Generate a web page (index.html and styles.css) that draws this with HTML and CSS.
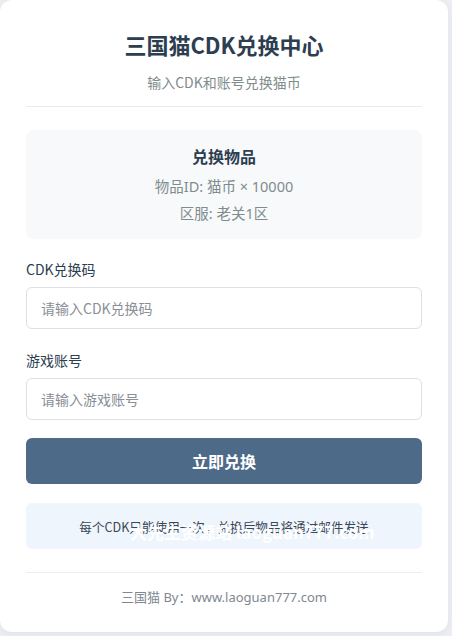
FILE: index.html
```html
<!DOCTYPE html>
<html lang="zh-CN">
<head>
<meta charset="utf-8">
<title>三国猫CDK兑换中心</title>
<link rel="stylesheet" href="styles.css">
</head>
<body>
<div class="card">
  <header class="header">
    <h1 class="title">三国猫CDK兑换中心</h1>
    <p class="subtitle">输入CDK和账号兑换猫币</p>
  </header>
  <section class="item-box">
    <h2 class="item-title">兑换物品</h2>
    <p class="item-line">物品ID: 猫币 × 10000</p>
    <p class="item-line">区服: 老关1区</p>
  </section>
  <form class="form">
    <div class="field">
      <label class="label">CDK兑换码</label>
      <input class="input" type="text" placeholder="请输入CDK兑换码">
    </div>
    <div class="field">
      <label class="label">游戏账号</label>
      <input class="input" type="text" placeholder="请输入游戏账号">
    </div>
    <button class="btn" type="button">立即兑换</button>
  </form>
  <div class="notice">
    <span class="notice-text">每个CDK只能使用一次，兑换后物品将通过邮件发送</span>
    <span class="watermark">大先生资源站 laoguan777.com</span>
  </div>
  <footer class="footer">三国猫 By：www.laoguan777.com</footer>
</div>
</body>
</html>
```
FILE: styles.css
```css
* { box-sizing: border-box; }
html, body { margin: 0; padding: 0; }
body {
  background: #eceef3;
  font-family: "Noto Sans", "Noto Sans CJK SC", sans-serif;
  width: 452px;
  height: 636px;
}
.card {
  width: 448px;
  background: #ffffff;
  border-radius: 12px;
  box-shadow: 0 2px 8px rgba(40, 50, 80, 0.06);
  padding: 29px 26px 25px;
}
.header {
  text-align: center;
  padding-bottom: 14px;
  border-bottom: 1px solid #e9ebee;
}
.title {
  margin: 0;
  font-size: 22px;
  line-height: 30px;
  font-weight: 700;
  color: #2c3e50;
  font-family: "Noto Sans CJK SC", sans-serif;
}
.subtitle {
  margin: 13px 0 0;
  font-size: 14px;
  line-height: 20px;
  color: #7f8c8d;
  font-family: "Noto Sans CJK SC", sans-serif;
}
.item-box {
  margin-top: 23px;
  background: #f8f9fb;
  border-radius: 8px;
  padding: 14px 16px 12px;
  text-align: center;
}
.item-title {
  margin: 0 0 5px;
  font-size: 16px;
  line-height: 24px;
  font-weight: 700;
  color: #2c3e50;
  font-family: "Noto Sans CJK SC", sans-serif;
}
.item-line {
  margin: 0;
  font-size: 14.5px;
  line-height: 27px;
  color: #7f8c8d;
  font-family: "Noto Sans", "Noto Sans CJK SC", sans-serif;
}
.form {
  margin-top: 20px;
  display: flex;
  flex-direction: column;
}
.field {
  display: flex;
  flex-direction: column;
  gap: 8px;
  margin-bottom: 21px;
}
.field:nth-child(2) { margin-bottom: 18px; }
.label {
  font-size: 14px;
  line-height: 20px;
  color: #2c3e50;
  font-family: "Noto Sans CJK SC", sans-serif;
}
.input {
  height: 42px;
  border: 1px solid #dcdfe6;
  border-radius: 6px;
  padding: 0 14px;
  font-size: 14px;
  font-family: "Noto Sans CJK SC", sans-serif;
  color: #333;
  background: #fff;
  outline: none;
}
.input::placeholder { color: #8a8f96; }
.btn {
  height: 46px;
  border: none;
  border-radius: 6px;
  background: #4d6a89;
  color: #ffffff;
  font-size: 16px;
  font-weight: 700;
  font-family: "Noto Sans CJK SC", sans-serif;
  cursor: pointer;
}
.notice {
  position: relative;
  margin-top: 19px;
  height: 46px;
  background: #eef5fd;
  border-radius: 6px;
  display: flex;
  align-items: center;
  justify-content: center;
  font-size: 12.6px;
  color: #3a4755;
  font-family: "Noto Sans CJK SC", sans-serif;
}
.watermark {
  position: absolute;
  left: 104px;
  top: 18px;
  font-size: 17px;
  line-height: 22px;
  font-weight: 700;
  color: #ffffff;
  white-space: nowrap;
  font-family: "Noto Sans CJK SC", sans-serif;
}
.footer {
  margin-top: 23px;
  border-top: 1px solid #eceef1;
  padding-top: 14px;
  text-align: center;
  font-size: 13px;
  line-height: 20px;
  color: #7f8790;
  font-family: "Noto Sans", "Noto Sans CJK SC", sans-serif;
}
```
